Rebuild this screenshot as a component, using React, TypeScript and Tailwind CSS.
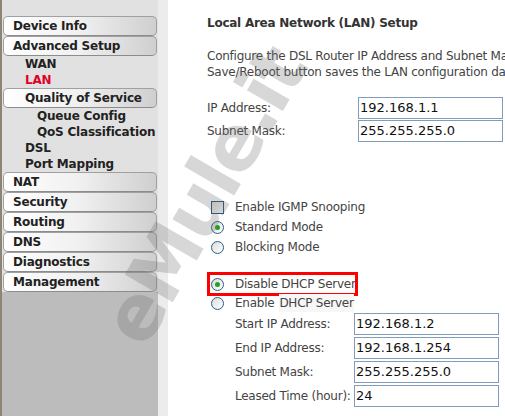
import React from 'react';

const menuFont = { fontFamily: '"DejaVu Sans", Verdana, sans-serif' };

function MenuButton({ label, indent = 'pl-[9px]' }: { label: string; indent?: string }) {
  return (
    <div
      className={`ml-[1px] w-[154px] h-[20px] flex items-center rounded-[5px] border border-[#a0a0a0] border-b-[#8c8c8c] bg-gradient-to-r from-white via-[#f0f0f0] to-[#cfcfcf] text-[12px] font-bold tracking-[-0.2px] text-[#222] ${indent}`}
    >
      {label}
    </div>
  );
}

function SubItem({ label, active = false, level = 1 }: { label: string; active?: boolean; level?: number }) {
  return (
    <div
      className={`h-[16px] flex items-center text-[12px] font-bold tracking-[-0.2px] whitespace-nowrap ${level === 1 ? 'pl-[23px]' : 'pl-[35px]'} ${active ? 'text-[#e0002a]' : 'text-[#222]'}`}
    >
      {label}
    </div>
  );
}

function Radio({ checked = false }: { checked?: boolean }) {
  return (
    <span className="w-[13px] h-[13px] rounded-full border border-[#2b5d8c] bg-gradient-to-br from-[#dcdcd6] to-white flex items-center justify-center shrink-0">
      {checked && <span className="w-[5px] h-[5px] rounded-full bg-[#21a121]" />}
    </span>
  );
}

function Field({ label, value }: { label: string; value: string }) {
  return (
    <div className="flex items-center h-[22px] mb-[2px]">
      <span className="w-[119px] shrink-0">{label}</span>
      <div className="w-[145px] h-[22px] shrink-0 border border-[#7f9db9] flex items-center pl-[1px] text-[13px] tracking-normal text-[#111]">
        {value}
      </div>
    </div>
  );
}

export default function App() {
  return (
    <div className="relative w-[505px] h-[416px] overflow-hidden flex bg-white">
      {/* Left menu */}
      <div className="w-[158px] shrink-0 border-l-2 border-[#8d8574] bg-[#bcbcbc] flex flex-col" style={menuFont}>
        <div className="bg-[#e1e1e1] pt-[16px]">
          <MenuButton label="Device Info" />
          <MenuButton label="Advanced Setup" />
          <SubItem label="WAN" />
          <SubItem label="LAN" active />
          <MenuButton label="Quality of Service" indent="pl-[21px]" />
          <SubItem label="Queue Config" level={2} />
          <SubItem label="QoS Classification" level={2} />
          <SubItem label="DSL" />
          <SubItem label="Port Mapping" />
          <MenuButton label="NAT" />
          <MenuButton label="Security" />
          <MenuButton label="Routing" />
          <MenuButton label="DNS" />
          <MenuButton label="Diagnostics" />
          <MenuButton label="Management" />
        </div>
      </div>
      <div className="w-[10px] shrink-0 bg-[#ececec]" />

      {/* Content */}
      <div
        className="flex-1 min-w-0 overflow-hidden pl-[39px] pt-[15px] text-[12px] tracking-[-0.25px] text-[#444] whitespace-nowrap"
        style={{ fontFamily: '"DejaVu Sans", Verdana, sans-serif' }}
      >
        <div className="font-bold text-[#333] h-[16px] leading-[16px]">Local Area Network (LAN) Setup</div>
        <div className="mt-[17px] leading-[16px]">
          <div>Configure the DSL Router IP Address and Subnet Mask for LAN interface.</div>
          <div>Save/Reboot button saves the LAN configuration data.</div>
        </div>
        <div className="mt-[17px]">
          <div className="flex items-center h-[22px] mb-[1px]">
            <span className="w-[151px] shrink-0">IP Address:</span>
            <div className="w-[145px] h-[22px] shrink-0 border border-[#7f9db9] flex items-center pl-[1px] text-[13px] tracking-normal text-[#111]">192.168.1.1</div>
          </div>
          <div className="flex items-center h-[22px]">
            <span className="w-[151px] shrink-0">Subnet Mask:</span>
            <div className="w-[145px] h-[22px] shrink-0 border border-[#7f9db9] flex items-center pl-[1px] text-[13px] tracking-normal text-[#111]">255.255.255.0</div>
          </div>
        </div>

        <div className="mt-[55px]">
          <div className="h-[20px] flex items-center pl-[4px]">
            <span className="w-[13px] h-[13px] border border-[#1c5180] bg-gradient-to-br from-[#dcdcd6] to-white shrink-0" />
            <span className="ml-[11px]">Enable IGMP Snooping</span>
          </div>
          <div className="h-[20px] flex items-center pl-[4px]">
            <Radio checked />
            <span className="ml-[11px]">Standard Mode</span>
          </div>
          <div className="h-[20px] flex items-center pl-[4px]">
            <Radio />
            <span className="ml-[11px]">Blocking Mode</span>
          </div>

          <div className="mt-[15px] w-[151px] h-[24px] border-[3px] border-[#ff0000] flex items-center pl-[1px]">
            <Radio checked />
            <span className="ml-[11px]">Disable DHCP Server</span>
          </div>
          <div className="h-[14px] flex items-center pl-[4px]">
            <Radio />
            <span className="ml-[11px]">Enable</span>
            <span className="ml-[5px] bg-[#f7f7f7]">DHCP Server</span>
          </div>
          <div className="pl-[28px] mt-[3px]">
            <Field label="Start IP Address:" value="192.168.1.2" />
            <Field label="End IP Address:" value="192.168.1.254" />
            <Field label="Subnet Mask:" value="255.255.255.0" />
            <Field label="Leased Time (hour):" value="24" />
          </div>
        </div>
      </div>

      {/* Watermark */}
      <div
        className="absolute left-[204px] top-[196px] -translate-x-1/2 -translate-y-1/2 -rotate-[60deg] text-[76px] font-bold tracking-[-3px] text-[rgba(110,110,110,0.28)] whitespace-nowrap pointer-events-none leading-none"
        style={{ fontFamily: '"DejaVu Sans", Verdana, sans-serif' }}
      >
        eMule.it
      </div>
    </div>
  );
}
